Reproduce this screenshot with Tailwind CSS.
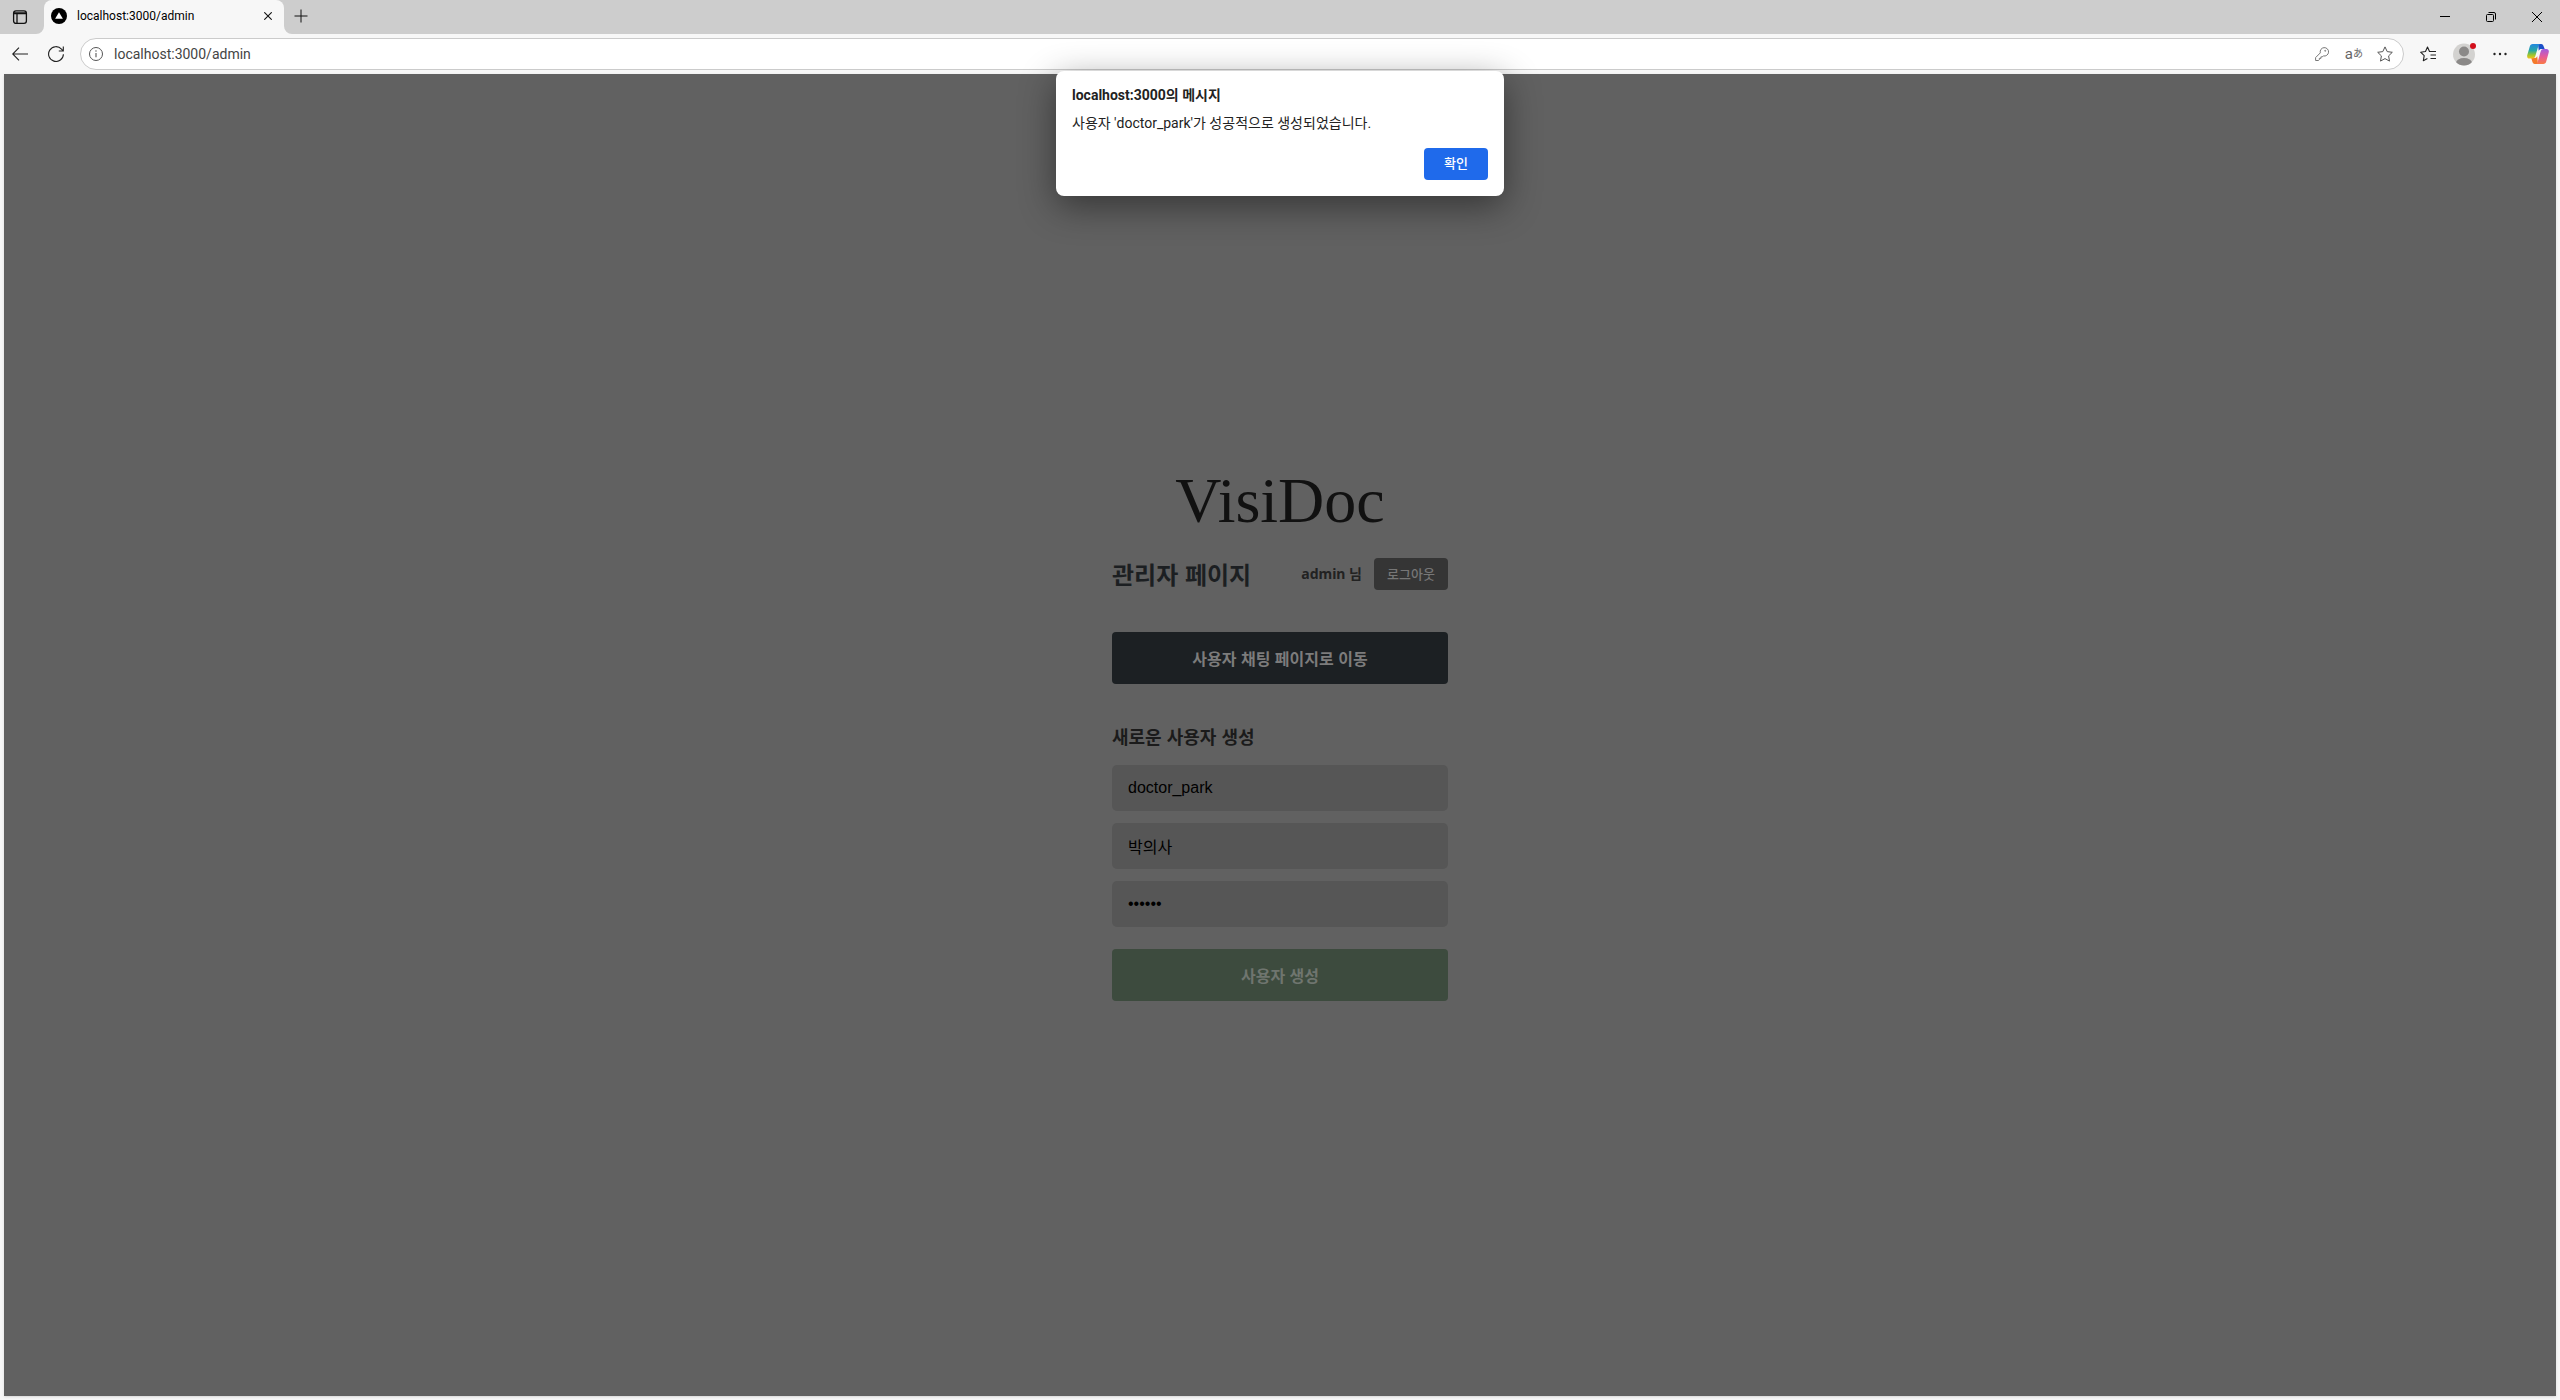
<!DOCTYPE html>
<html lang="ko">
<head>
<meta charset="utf-8">
<title>localhost:3000/admin</title>
<script src="https://cdn.jsdelivr.net/npm/@tailwindcss/browser@4"></script>
</head>
<body class="relative flex min-h-screen flex-col bg-[#f7f7f7] font-['Roboto','Noto_Sans_CJK_KR',sans-serif] text-black">

<header>
  <!-- Tab strip -->
  <div class="flex h-[34px] items-stretch bg-[#cdcdcd]">
    <button aria-label="탭 작업 메뉴" class="flex w-11 items-center pl-3">
      <svg class="size-4" viewBox="0 0 16 16" fill="none" stroke="#111" stroke-width="1.3"><rect x="1.6" y="1.8" width="12.8" height="12.6" rx="2.4"/><path d="M2 3.8h12M2 4.6h12M5 5v9.2"/></svg>
    </button>
    <div class="relative flex w-60 items-center rounded-t-lg bg-[#f7f7f7] pb-[2px] pl-[7px] pr-2">
      <svg class="absolute bottom-0 -left-2 size-2" viewBox="0 0 8 8"><path d="M8 0v8H0a8 8 0 0 0 8-8z" fill="#f7f7f7"/></svg>
      <svg class="absolute bottom-0 -right-2 size-2" viewBox="0 0 8 8"><path d="M0 0v8h8a8 8 0 0 1-8-8z" fill="#f7f7f7"/></svg>
      <svg class="size-4" viewBox="0 0 16 16"><circle cx="8" cy="8" r="8"/><path d="M8 4.2l3.9 6.6H4.1z" fill="#fff"/></svg>
      <span class="ml-[10px] flex-1 text-[12px] leading-4">localhost:3000/admin</span>
      <button aria-label="탭 닫기" class="p-1"><svg class="size-2" viewBox="0 0 8 8" stroke="#111" stroke-width="1.1"><path d="M.3.3l7.4 7.4M7.7.3L.3 7.7"/></svg></button>
    </div>
    <button aria-label="새 탭" class="flex items-center pb-[2px] pl-[10px]"><svg class="size-[14px]" viewBox="0 0 14 14" stroke="#111" stroke-width="1"><path d="M7 .5v13M.5 7h13"/></svg></button>
    <div class="ml-auto flex items-center">
      <button aria-label="최소화" class="flex w-[46px] justify-center"><svg class="size-[10px]" viewBox="0 0 10 10" stroke="#000"><path d="M0 4.5h10"/></svg></button>
      <button aria-label="이전 크기로" class="flex w-[46px] justify-center"><svg class="size-[10px]" viewBox="0 0 10 10" fill="none" stroke="#000"><rect x=".5" y="2.5" width="7" height="7" rx="1"/><path d="M2.5.5H8A1.5 1.5 0 0 1 9.500 2v5.500"/></svg></button>
      <button aria-label="닫기" class="flex w-[46px] justify-center"><svg class="size-[10px]" viewBox="0 0 10 10" stroke="#000"><path d="M0 0l10 10M10 0L0 10"/></svg></button>
    </div>
  </div>

  <!-- Toolbar -->
  <div class="flex h-10 items-center pl-3 pr-[11px]">
    <button aria-label="뒤로"><svg class="size-4" viewBox="0 0 16 16" fill="none" stroke="#222" stroke-width="1.1"><path d="M16 8H.8M7 1.700L.700 8 7 14.300"/></svg></button>
    <button aria-label="새로 고침" class="ml-5"><svg class="size-4" viewBox="0 0 16 16" fill="none" stroke="#222" stroke-width="1.1"><path d="M15.400 8.200A7.400 7.400 0 1 1 13.500 3.100L15.200 5M15.300.5V5h-4.500"/></svg></button>
    <div class="ml-4 flex h-8 flex-1 items-center rounded-full border border-[#cbcbcb] bg-white pl-2 pr-[10px]">
      <svg class="size-[14px]" viewBox="0 0 14 14" fill="none" stroke="#555"><circle cx="7" cy="7" r="6.500"/><path d="M7 6v4.200" stroke-width="1.1"/><circle cx="7" cy="4" r=".3"/></svg>
      <input aria-label="주소" value="localhost:3000/admin" class="ml-[11px] min-w-0 flex-1 bg-transparent text-[14px] leading-5 text-[#444] outline-none">
      <div class="flex items-center text-[#666]">
        <button aria-label="암호"><svg class="size-[14px]" viewBox="0 0 14 14" fill="none" stroke="#777"><path d="M5.300 5.900A4.200 4.200 0 1 1 8.300 8.900L7.300 9.900H5.900v1.500H4.300v1.400L3.500 13.500H.6v-2.900z" stroke-linejoin="round"/><circle cx="10.200" cy="3.800" r=".5"/></svg></button>
        <button aria-label="번역" class="ml-4 flex items-center text-[#666]"><span class="text-[15px] leading-4">a</span><span class="text-[10px] leading-4">あ</span></button>
        <button aria-label="즐겨찾기에 추가" class="ml-[14px]"><svg class="size-4" viewBox="0 0 16 16" fill="none" stroke="#555" stroke-linejoin="round"><path d="M8 .9l2.200 4.700 5.100.7-3.700 3.600.9 5.200L8 12.600l-4.500 2.500.9-5.200L.7 6.300l5.100-.7z"/></svg></button>
      </div>
    </div>
    <button aria-label="즐겨찾기" class="ml-4"><svg class="size-4" viewBox="0 0 16 16" fill="none" stroke="#222" stroke-width="1.100" stroke-linejoin="round"><path d="M11 5.500H9.500L7.500 1l-2 4.500-4.900.7 3.600 3.500-.9 5.100 4.100-2.200M9.500 5.500H16M10.500 9H16M10.500 12.500H16"/></svg></button>
    <button aria-label="프로필" class="ml-4"><svg class="size-6" viewBox="0 0 24 24"><clipPath id="avatar"><circle cx="12" cy="12.500" r="11"/></clipPath><circle cx="12" cy="12.500" r="11" fill="#d3d2d0"/><g clip-path="url(#avatar)" fill="#8b8988"><circle cx="12" cy="9.500" r="5"/><ellipse cx="12" cy="21" rx="8" ry="5"/></g><circle cx="21" cy="4" r="3" fill="#d20f1c"/></svg></button>
    <button aria-label="설정 및 기타" class="ml-[17px]"><svg class="h-4 w-[14px]" viewBox="0 0 14 16" fill="#222"><circle cx="1.500" cy="8" r="1.200"/><circle cx="7" cy="8" r="1.200"/><circle cx="12.500" cy="8" r="1.200"/></svg></button>
    <button aria-label="Copilot" class="ml-5">
      <svg class="size-[22px]" viewBox="0 0 22 22">
        <defs>
          <linearGradient id="ca" x1="0" y1="0" x2="0" y2="1"><stop offset="0" stop-color="#2386e0"/><stop offset=".45" stop-color="#26a9a5"/><stop offset=".75" stop-color="#9bc52e"/><stop offset="1" stop-color="#f5c31c"/></linearGradient>
          <linearGradient id="cb" x1="0" y1="0" x2="0" y2="1"><stop offset="0" stop-color="#a05be0"/><stop offset=".5" stop-color="#e65a9a"/><stop offset="1" stop-color="#fa7a45"/></linearGradient>
        </defs>
        <path d="M11 1h3.200c1.500 0 2 .9 2.500 2.500L17.700 6h-3.200c-1.500 0-2.200.5-2.700 2z" fill="#1b50c8"/>
        <path d="M11 21H7.800c-1.500 0-2-.9-2.500-2.500L4.300 15h3.200c1.500 0 2.200-.5 2.700-2z" fill="#f47a2b"/>
        <path d="M5.800 1h7.400c-1.300.3-1.700 1.500-2.100 2.800L8.500 12.500C8 14.300 7.300 15.500 5.300 15.500H2.500C.5 15.500-.2 14 .3 12L2.700 3.700C3.200 2 4 1 5.800 1z" fill="url(#ca)"/>
        <path d="M16.200 21H8.800c1.300-.3 1.700-1.500 2.100-2.800l2.600-9.100C14 7.300 14.700 6 16.700 6h2.800c2 0 2.700 1.500 2.200 3.500l-2.400 8.800C18.800 20 18 21 16.200 21z" fill="url(#cb)"/>
      </svg>
    </button>
  </div>
</header>

<!-- Admin page, dimmed while the alert is open -->
<main class="mx-1 mb-1 flex flex-1 flex-col items-center justify-center bg-[#616161] font-['Noto_Sans_CJK_KR',sans-serif] shadow-sm">
  <div class="flex w-[336px] flex-col">
    <h1 class="text-center font-['Liberation_Serif',serif] text-[64px] leading-[64px] text-[#111]">VisiDoc</h1>
    <div class="mt-[25px] flex h-8 items-center">
      <h2 class="flex-1 text-[24px] leading-8 font-bold text-[#1c1f22]">관리자 페이지</h2>
      <span class="mr-3 font-['Noto_Sans','Noto_Sans_CJK_KR',sans-serif] text-[14px] leading-5 font-bold text-[#222]">admin 님</span>
      <button class="h-8 w-[74px] rounded bg-[#353535] text-[13px] leading-5 font-medium text-[#777]">로그아웃</button>
    </div>
    <button class="mt-[42px] h-[52px] rounded bg-[#1c2023] text-[16px] leading-6 font-bold text-[#7c7c7c]">사용자 채팅 페이지로 이동</button>
    <form class="mt-[38px] flex flex-col">
      <h3 class="text-[18px] leading-7 font-bold text-[#1b1b1b]">새로운 사용자 생성</h3>
      <div class="mt-[15px] flex flex-col gap-3">
        <input aria-label="아이디" value="doctor_park" class="h-[46px] rounded-[5px] bg-[#565656] px-4 font-['Liberation_Sans','Noto_Sans_CJK_KR',sans-serif] text-[16px] text-black">
        <input aria-label="이름" value="박의사" class="h-[46px] rounded-[5px] bg-[#565656] px-4 font-['Liberation_Sans','Noto_Sans_CJK_KR',sans-serif] text-[16px] text-black">
        <input aria-label="비밀번호" type="password" value="123456" class="h-[46px] rounded-[5px] bg-[#565656] px-4 font-['Liberation_Sans','Noto_Sans_CJK_KR',sans-serif] text-[16px] text-black">
      </div>
      <button type="button" class="mt-[22px] h-[52px] rounded bg-[#3d4b3e] text-[16px] leading-6 font-bold text-[#6f756f]">사용자 생성</button>
    </form>
  </div>
</main>

<!-- Browser alert -->
<div role="alertdialog" aria-labelledby="alert-title" aria-describedby="alert-text" class="absolute top-[71px] left-1/2 flex w-[448px] -translate-x-1/2 flex-col rounded-lg bg-white px-4 pt-[14px] pb-4 text-[#222] shadow-[0_10px_36px_rgba(0,0,0,0.45)]">
  <h2 id="alert-title" class="text-[14px] leading-5 font-bold">localhost:3000의 메시지</h2>
  <p id="alert-text" class="mt-2 text-[14px] leading-5">사용자 'doctor_park'가 성공적으로 생성되었습니다.</p>
  <button class="mt-[15px] h-8 w-16 self-end rounded bg-[#1f6aeb] text-[13px] font-medium text-white">확인</button>
</div>

</body>
</html>
